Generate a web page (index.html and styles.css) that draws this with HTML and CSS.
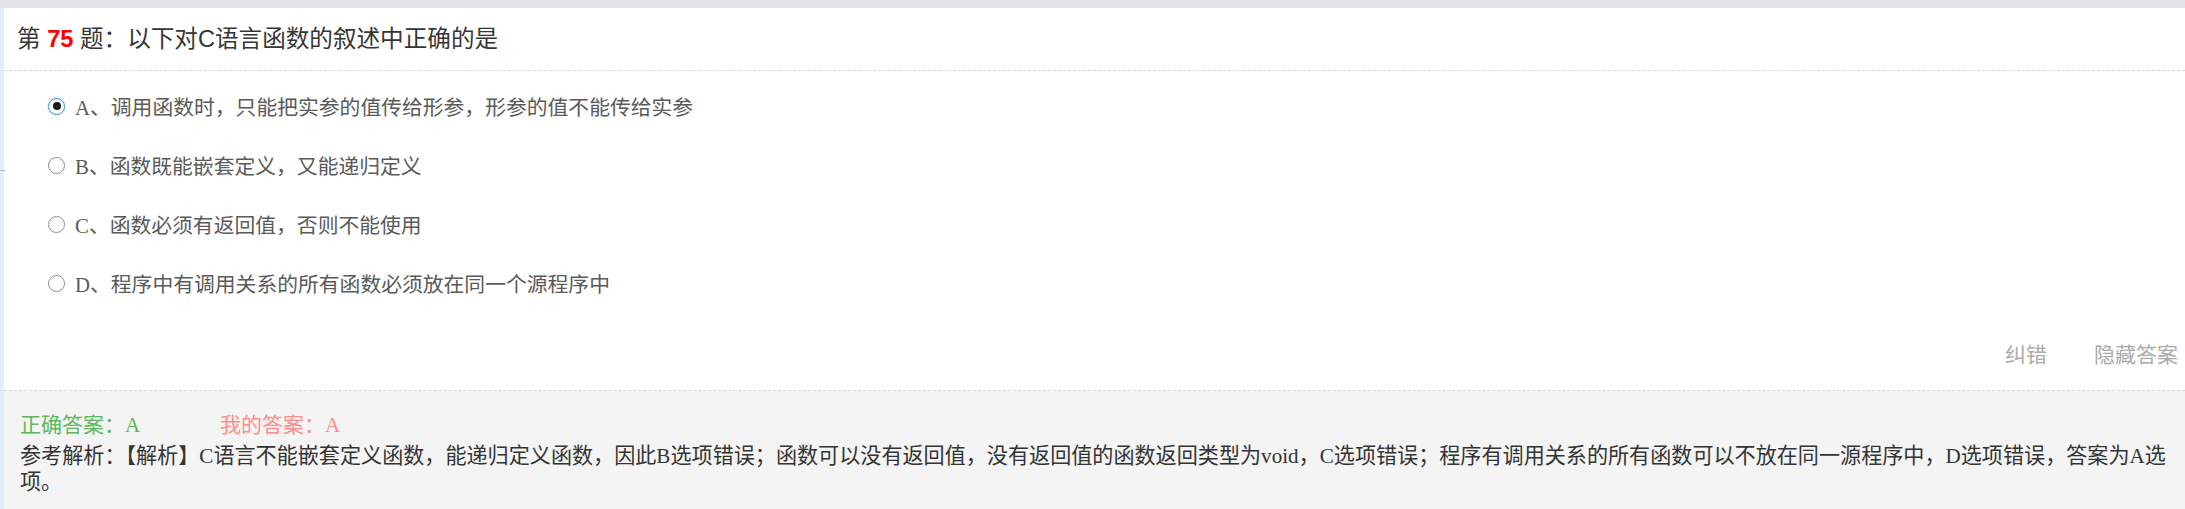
FILE: index.html
```html
<!DOCTYPE html>
<html lang="zh-CN">
<head>
  <meta charset="UTF-8">
  <title>第75题</title>
  <link rel="stylesheet" href="styles.css">
</head>
<body>

<div class="topbar"></div>
<div class="edge-tick"></div>

<div class="wrap">
  <div class="question">
    <div class="q-title">第 <span class="q-num">75</span> 题：以下对C语言函数的叙述中正确的是</div>

    <ul class="options">
      <li><span class="radio checked"></span><span class="opt-text"><span class="latin">A</span>、调用函数时，只能把实参的值传给形参，形参的值不能传给实参</span></li>
      <li><span class="radio"></span><span class="opt-text"><span class="latin">B</span>、函数既能嵌套定义，又能递归定义</span></li>
      <li><span class="radio"></span><span class="opt-text"><span class="latin">C</span>、函数必须有返回值，否则不能使用</span></li>
      <li><span class="radio"></span><span class="opt-text"><span class="latin">D</span>、程序中有调用关系的所有函数必须放在同一个源程序中</span></li>
    </ul>

    <div class="tools">
      <a href="#">纠错</a>
      <a href="#">隐藏答案</a>
    </div>
  </div>

  <div class="answer">
    <div class="answer-row">
      <span class="right-ans">正确答案：<span class="latin">A</span></span>
      <span class="my-ans">我的答案：<span class="latin">A</span></span>
    </div>
    <div class="analysis">参考解析：【解析】<span class="latin">C</span>语言不能嵌套定义函数，能递归定义函数，因此<span class="latin">B</span>选项错误；函数可以没有返回值，没有返回值的函数返回类型为<span class="latin">void</span>，<span class="latin">C</span>选项错误；程序有调用关系的所有函数可以不放在同一源程序中，<span class="latin">D</span>选项错误，答案为<span class="latin">A</span>选项。</div>
  </div>
</div>

</body>
</html>
```

FILE: styles.css
```css
body {
  margin: 0;
  padding: 0;
  background: #deeefc;
  font-family: "Liberation Sans", "Noto Sans CJK SC", sans-serif;
}
.topbar {
  height: 8px;
  background: #e2e4e7;
}
.edge-tick {
  position: absolute;
  left: 0;
  top: 170px;
  width: 5px;
  height: 1px;
  background: #b8bcc2;
}
.wrap {
  margin-left: 4px;
  background: #fff;
  height: 501px;
  overflow: hidden;
}
.latin {
  font-family: "Liberation Serif", "Noto Sans CJK SC", serif;
}
.q-title {
  height: 62px;
  line-height: 62px;
  padding-left: 13px;
  font-size: 23.6px;
  color: #363636;
  border-bottom: 1px dashed #d6d6d6;
}
.q-num {
  color: #f00;
  font-weight: bold;
}
.options {
  list-style: none;
  margin: 0;
  padding: 20px 0 0 44px;
  display: flex;
  flex-direction: column;
  gap: 29px;
}
.options li {
  display: flex;
  align-items: center;
  height: 30px;
  font-size: 20.8px;
  color: #5a5a5a;
}
.radio {
  position: relative;
  width: 15px;
  height: 15px;
  border: 1.5px solid #8c8c8c;
  border-radius: 50%;
  background: #fff;
  margin-right: 10px;
  flex-shrink: 0;
}
.radio.checked {
  border-color: #3d9ae2;
  box-shadow: 0 0 2px #8cc4f0;
}
.radio.checked::after {
  content: "";
  position: absolute;
  left: 3.5px;
  top: 3.5px;
  width: 8px;
  height: 8px;
  border-radius: 50%;
  background: #1a1a1a;
}
.tools {
  display: flex;
  justify-content: flex-end;
  gap: 47px;
  margin-top: 42px;
  padding: 0 7px 20px 0;
  line-height: 30px;
  font-size: 21px;
  border-bottom: 1px dashed #d6d6d6;
}
.tools a {
  color: #aaa;
  text-decoration: none;
}
.answer {
  background: #f4f4f4;
  padding: 19px 0 0 16px;
  height: 200px;
}
.answer-row {
  display: flex;
  line-height: 30px;
  font-size: 21px;
}
.right-ans {
  width: 200px;
  color: #5cb85c;
}
.my-ans {
  color: #ff8c8c;
}
.analysis {
  margin-top: 3px;
  font-size: 21.1px;
  line-height: 26px;
  color: #333;
}
```
